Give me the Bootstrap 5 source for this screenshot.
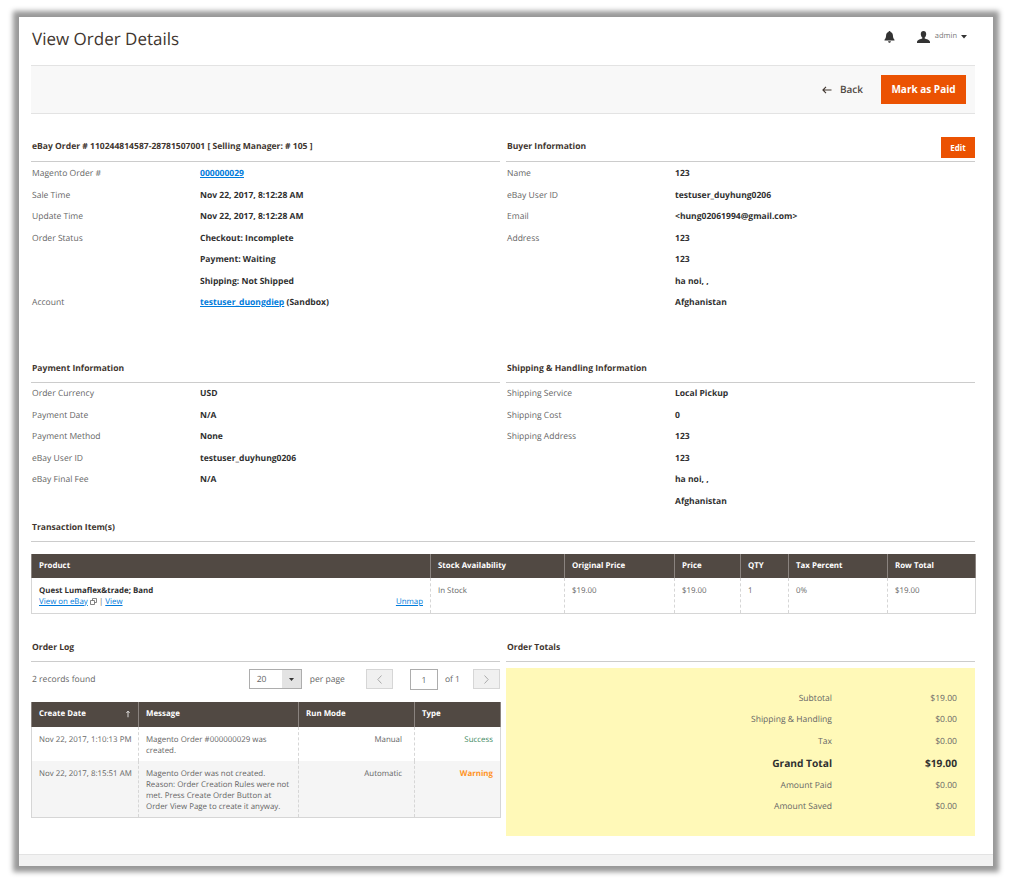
<!DOCTYPE html>
<html lang="en">
<head>
  <meta charset="UTF-8">
  <title>View Order Details</title>
  <link href="https://cdn.jsdelivr.net/npm/bootstrap@5.3.0/dist/css/bootstrap.min.css" rel="stylesheet">
  <style>
    body { background: #fff; margin: 0; padding: 17px 19px; font-family: "Open Sans", sans-serif; font-size: 8.55px; color: #41362f; text-rendering: geometricPrecision; }
    .shot { width: 974px; height: 849px; background: #fff; box-shadow: 0 0 5px 6px #999; overflow: hidden; display: flex; flex-direction: column; }
    .page-body { padding: 0 18px 0 12px; flex: 1; }
    .top-head { height: 48px; }
    .page-name { font-size: 17px; font-weight: 400; color: #41362f; margin: 0; padding-left: 1px; position: relative; top: -2px; }
    .top-tools { position: relative; top: -4px; }
    .admin-name { font-size: 7.5px; color: #777; margin-left: 5px; }
    .user-icon { margin-left: 22px; }
    .toolbar { height: 49px; background: #f8f8f8; border-top: 1px solid #e3e3e3; border-bottom: 1px solid #e3e3e3; padding-right: 9px; }
    .back-link { font-size: 10px; font-weight: 600; color: #514943; margin-right: 18px; }
    .btn-orange { background: #eb5202; color: #fff; border: 1px solid #eb5202; border-radius: 0; font-weight: 700; font-family: inherit; }
    .btn-orange:hover { background: #eb5202; color: #fff; border-color: #eb5202; }
    .btn-paid { width: 85px; height: 29px; font-size: 10px; padding: 0; }
    .btn-edit { width: 34px; height: 21px; font-size: 8px; padding: 0; position: absolute; right: 0; top: -4px; }
    .two-col { display: grid; grid-template-columns: 469px 469px; column-gap: 6px; }
    .sect-head { position: relative; font-size: 8.55px; font-weight: 700; color: #41362f; border-bottom: 1px solid #ccc; height: 20px; line-height: 9px; margin: 0 0 .5px; padding: 1px 0 0 1px; }
    .block-one .sect-head { height: 21px; margin-bottom: 1px; }
    .info-row { display: flex; height: 21.5px; line-height: 21.5px; padding-left: 1px; }
    .info-label { width: 168px; color: #666; flex: none; }
    .info-val { font-weight: 700; color: #303030; }
    .info-val a, .log-link { color: #007bdb; }
    .block-one { padding-top: 27px; height: 248.5px; }
    .block-two { height: 159px; }
    .block-three { height: 120px; }
    .block-three .sect-head { margin-bottom: 12px; }
    .data-grid { table-layout: fixed; width: 100%; margin: 0; font-size: 7.9px; border-collapse: collapse; --bs-table-bg: transparent; }
    .data-grid th { background: #514943; color: #fff; font-size: 7.9px; font-weight: 700; height: 24px; padding: 2px 7px 0; border: 1px solid #8a837f; border-width: 0 1px; vertical-align: middle; position: relative; box-shadow: none; }
    .log-grid th { height: 25px; }
    .data-grid td { padding: 8px 7px 4px; border: 1px dashed #d6d6d6; border-width: 0 1px; color: #666; line-height: 11px; box-shadow: none; vertical-align: top; }
    .data-grid tbody tr:last-child td { border-bottom: 1px solid #d6d6d6; }
    .data-grid tbody td:first-child { border-left: 1px solid #d6d6d6; }
    .data-grid tbody td:last-child { border-right: 1px solid #d6d6d6; }
    .data-grid tr.alt td { background: #f5f5f5; }
    .item-row td { height: 36px; }
    .date-cell { white-space: nowrap; }
    .data-grid td.mode-cell { padding-right: 12px; }
    .prod-name { font-weight: 700; color: #303030; }
    .log-link { text-decoration: underline; }
    .w-prod { width: 399px; } .w-stock { width: 134px; } .w-orig { width: 110px; } .w-price { width: 66px; }
    .w-qty { width: 48px; } .w-tax { width: 99px; } .w-total { width: 88px; }
    .w-date { width: 107px; } .w-msg { width: 160px; } .w-mode { width: 116px; } .w-type { width: 86px; }
    .pager-bar { height: 22px; margin: 6px 0 12px; padding: 1px 0 0 1px; color: #666; }
    .per-select { width: 53px; height: 20px; border: 1px solid #adadad; background: #fff; }
    .per-select span { padding-left: 7px; flex: 1; }
    .per-caret { width: 19px; height: 18px; background: #e3e3e3; }
    .pg-btn { width: 27px; height: 20px; background: #f0f0f0; border: 1px solid #d6d6d6; }
    .pg-input { width: 28px; height: 21px; border: 1px solid #adadad; background: #fff; text-align: center; line-height: 20px; }
    .gap-perpage { margin-left: 8px; }
    .gap-prev { margin-left: 21px; }
    .gap-input { margin-left: 17px; }
    .gap-of { margin-left: 7px; }
    .gap-next { margin-left: 13px; }
    .ok-text { color: #3f8a5f; }
    .warn-text { color: #ff9326; font-weight: 700; }
    .totals-box { background: #fff9b8; height: 168px; margin-top: 6.5px; padding: 19.5px 18px 0 0; color: #666; }
    .total-row { display: flex; justify-content: flex-end; height: 21.75px; line-height: 21.75px; text-align: right; }
    .total-label { flex: 1; }
    .total-val { width: 125px; }
    .grand-row { font-size: 10.2px; font-weight: 700; color: #303030; }
    .page-foot { height: 12px; background: #f2f2f2; border-top: 1px solid #e3e3e3; flex: none; }
  </style>
</head>
<body>
  <div class="shot">
    <div class="page-body">
      <div class="top-head d-flex align-items-center justify-content-between">
        <h1 class="page-name">View Order Details</h1>
        <div class="top-tools d-flex align-items-center">
          <svg width="11" height="12" viewBox="0 0 11 12"><path fill="#333" d="M5.5 0c.6 0 1 .4 1 .9 1.6.4 2.3 1.700 2.400 3.300.1 2 .4 3.200 1.600 4.600v.7H.5v-.7C1.700 7.400 2 6.200 2.100 4.200 2.200 2.600 2.900 1.300 4.500.9c0-.5.400-.9 1-.9zM4.100 10.200h2.800c0 .9-.6 1.500-1.400 1.500s-1.400-.6-1.400-1.500z"/></svg>
          <svg class="user-icon" width="13" height="12" viewBox="0 0 13 12"><path fill="#333" d="M6.500 0C8.200 0 9.200 1.200 9.200 3c0 1.500-.6 2.900-1.500 3.500v1.100c1.700.6 4.800 1 5.300 3.400v1H0v-1c.5-2.400 3.600-2.800 5.300-3.400V6.500C4.400 5.900 3.800 4.500 3.800 3c0-1.800 1-3 2.700-3z"/></svg>
          <span class="admin-name">admin</span>
          <svg class="ms-1" width="6" height="4" viewBox="0 0 6 4"><path fill="#333" d="M0 0h6L3 3.500z"/></svg>
          <span class="ms-2"></span>
        </div>
      </div>

      <div class="toolbar d-flex align-items-center justify-content-end">
        <a class="back-link text-decoration-none d-flex align-items-center" href="#">
          <svg class="me-2" width="10" height="8" viewBox="0 0 10 8"><path fill="none" stroke="#41362f" stroke-width="1.100" d="M9.500 4H1M4 .8 .9 4 4 7.200"/></svg>
          Back
        </a>
        <button class="btn btn-orange btn-paid" type="button">Mark as Paid</button>
      </div>

      <div class="two-col block-one">
        <div>
          <h2 class="sect-head">eBay Order # 110244814587-28781507001 [ Selling Manager: # 105 ]</h2>
          <div class="info-row"><div class="info-label">Magento Order #</div><div class="info-val"><a href="#">000000029</a></div></div>
          <div class="info-row"><div class="info-label">Sale Time</div><div class="info-val">Nov 22, 2017, 8:12:28 AM</div></div>
          <div class="info-row"><div class="info-label">Update Time</div><div class="info-val">Nov 22, 2017, 8:12:28 AM</div></div>
          <div class="info-row"><div class="info-label">Order Status</div><div class="info-val">Checkout: Incomplete</div></div>
          <div class="info-row"><div class="info-label"></div><div class="info-val">Payment: Waiting</div></div>
          <div class="info-row"><div class="info-label"></div><div class="info-val">Shipping: Not Shipped</div></div>
          <div class="info-row"><div class="info-label">Account</div><div class="info-val"><a href="#">testuser_duongdiep</a> (Sandbox)</div></div>
        </div>
        <div>
          <h2 class="sect-head">Buyer Information<button class="btn btn-orange btn-edit" type="button">Edit</button></h2>
          <div class="info-row"><div class="info-label">Name</div><div class="info-val">123</div></div>
          <div class="info-row"><div class="info-label">eBay User ID</div><div class="info-val">testuser_duyhung0206</div></div>
          <div class="info-row"><div class="info-label">Email</div><div class="info-val">&lt;hung02061994@gmail.com&gt;</div></div>
          <div class="info-row"><div class="info-label">Address</div><div class="info-val">123</div></div>
          <div class="info-row"><div class="info-label"></div><div class="info-val">123</div></div>
          <div class="info-row"><div class="info-label"></div><div class="info-val">ha noi, ,</div></div>
          <div class="info-row"><div class="info-label"></div><div class="info-val">Afghanistan</div></div>
        </div>
      </div>

      <div class="two-col block-two">
        <div>
          <h2 class="sect-head">Payment Information</h2>
          <div class="info-row"><div class="info-label">Order Currency</div><div class="info-val">USD</div></div>
          <div class="info-row"><div class="info-label">Payment Date</div><div class="info-val">N/A</div></div>
          <div class="info-row"><div class="info-label">Payment Method</div><div class="info-val">None</div></div>
          <div class="info-row"><div class="info-label">eBay User ID</div><div class="info-val">testuser_duyhung0206</div></div>
          <div class="info-row"><div class="info-label">eBay Final Fee</div><div class="info-val">N/A</div></div>
        </div>
        <div>
          <h2 class="sect-head">Shipping &amp; Handling Information</h2>
          <div class="info-row"><div class="info-label">Shipping Service</div><div class="info-val">Local Pickup</div></div>
          <div class="info-row"><div class="info-label">Shipping Cost</div><div class="info-val">0</div></div>
          <div class="info-row"><div class="info-label">Shipping Address</div><div class="info-val">123</div></div>
          <div class="info-row"><div class="info-label"></div><div class="info-val">123</div></div>
          <div class="info-row"><div class="info-label"></div><div class="info-val">ha noi, ,</div></div>
          <div class="info-row"><div class="info-label"></div><div class="info-val">Afghanistan</div></div>
        </div>
      </div>

      <div class="block-three">
        <h2 class="sect-head">Transaction Item(s)</h2>
        <table class="table data-grid">
          <thead>
            <tr>
              <th class="w-prod">Product</th><th class="w-stock">Stock Availability</th><th class="w-orig">Original Price</th><th class="w-price">Price</th><th class="w-qty">QTY</th><th class="w-tax">Tax Percent</th><th class="w-total">Row Total</th>
            </tr>
          </thead>
          <tbody>
            <tr class="item-row">
              <td>
                <div class="prod-name">Quest Lumaflex&amp;trade; Band</div>
                <div class="d-flex justify-content-between">
                  <span><a class="log-link" href="#">View on eBay</a>
                    <svg width="7" height="7" viewBox="0 0 7 7"><path fill="none" stroke="#666" stroke-width=".8" d="M.5 2.500h4v4h-4zM2.500 2.500V.5h4v4h-2"/></svg>
                    | <a class="log-link" href="#">View</a></span>
                  <a class="log-link" href="#">Unmap</a>
                </div>
              </td>
              <td>In Stock</td><td>$19.00</td><td>$19.00</td><td>1</td><td>0%</td><td>$19.00</td>
            </tr>
          </tbody>
        </table>
      </div>

      <div class="two-col">
        <div>
          <h2 class="sect-head">Order Log</h2>
          <div class="pager-bar d-flex align-items-center">
            <span>2 records found</span>
            <div class="per-select d-flex align-items-center ms-auto"><span>20</span><div class="per-caret d-flex align-items-center justify-content-center"><svg width="5" height="3" viewBox="0 0 5 3"><path fill="#333" d="M0 0h5L2.500 3z"/></svg></div></div>
            <span class="gap-perpage">per page</span>
            <div class="pg-btn gap-prev d-flex align-items-center justify-content-center"><svg width="5" height="9" viewBox="0 0 5 9"><path fill="none" stroke="#aaa" d="M4.500.5.800 4.500l3.700 4"/></svg></div>
            <div class="pg-input gap-input">1</div>
            <span class="gap-of">of 1</span>
            <div class="pg-btn gap-next d-flex align-items-center justify-content-center"><svg width="5" height="9" viewBox="0 0 5 9"><path fill="none" stroke="#aaa" d="M.5.500 4.200 4.500.5 8.500"/></svg></div>
          </div>
          <table class="table data-grid log-grid">
            <thead>
              <tr>
                <th class="w-date">Create Date<svg class="position-absolute top-50 end-0 translate-middle-y me-2" width="4" height="7" viewBox="0 0 4 7"><path fill="none" stroke="#fff" stroke-width=".8" d="M2 7V1M.4 2.400 2 .6l1.600 1.800"/></svg></th><th class="w-msg">Message</th><th class="w-mode">Run Mode</th><th class="w-type">Type</th>
              </tr>
            </thead>
            <tbody>
              <tr>
                <td class="date-cell">Nov 22, 2017, 1:10:13 PM</td>
                <td>Magento Order #000000029 was created.</td>
                <td class="text-end mode-cell">Manual</td>
                <td class="text-end"><span class="ok-text">Success</span></td>
              </tr>
              <tr class="alt">
                <td class="date-cell">Nov 22, 2017, 8:15:51 AM</td>
                <td>Magento Order was not created. Reason: Order Creation Rules were not met. Press Create Order Button at Order View Page to create it anyway.</td>
                <td class="text-end mode-cell">Automatic</td>
                <td class="text-end"><span class="warn-text">Warning</span></td>
              </tr>
            </tbody>
          </table>
        </div>
        <div>
          <h2 class="sect-head">Order Totals</h2>
          <div class="totals-box">
            <div class="total-row"><div class="total-label">Subtotal</div><div class="total-val">$19.00</div></div>
            <div class="total-row"><div class="total-label">Shipping &amp; Handling</div><div class="total-val">$0.00</div></div>
            <div class="total-row"><div class="total-label">Tax</div><div class="total-val">$0.00</div></div>
            <div class="total-row grand-row"><div class="total-label">Grand Total</div><div class="total-val">$19.00</div></div>
            <div class="total-row"><div class="total-label">Amount Paid</div><div class="total-val">$0.00</div></div>
            <div class="total-row"><div class="total-label">Amount Saved</div><div class="total-val">$0.00</div></div>
          </div>
        </div>
      </div>
    </div>
    <div class="page-foot"></div>
  </div>
  <script src="https://cdn.jsdelivr.net/npm/bootstrap@5.3.0/dist/js/bootstrap.bundle.min.js"></script>
</body>
</html>
